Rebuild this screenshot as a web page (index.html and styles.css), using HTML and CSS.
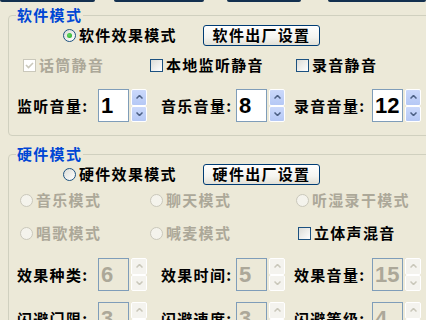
FILE: index.html
```html
<!DOCTYPE html>
<html lang="zh-CN">
<head>
    <meta charset="UTF-8">
    <meta name="viewport" content="width=device-width, initial-scale=1.0">
    <title>音效设置</title>
    <link rel="stylesheet" href="styles.css">
</head>
<body>

    <!-- tombol di atas (terpotong) -->
    <div class="topbar">
        <span class="tb tb1"></span>
        <span class="tb tb2"></span>
        <span class="tb tb3"></span>
        <span class="tb tb4"></span>
    </div>

    <!-- 软件模式 -->
    <fieldset class="group g1">
        <legend>软件模式</legend>
        <div class="mode-row">
            <label class="radio on"><span class="rb"></span>软件效果模式</label>
            <button class="btn">软件出厂设置</button>
        </div>
        <div class="opts opts-soft">
            <label class="check dis"><span class="cb"><svg width="11" height="11" viewBox="0 0 11 11"><polyline points="2,5 4.5,7.5 9,3" /></svg></span>话筒静音</label>
            <label class="check"><span class="cb"></span>本地监听静音</label>
            <label class="check"><span class="cb"></span>录音静音</label>
        </div>
        <div class="spins">
            <span class="lbl l1">监听音量:</span>
            <input class="num" value="1">
            <span class="updown">
                <span><svg width="7" height="4" viewBox="0 0 7 4"><polyline points="0.5,3.5 3.5,0.5 6.5,3.5" /></svg></span>
                <span><svg width="7" height="4" viewBox="0 0 7 4"><polyline points="0.5,0.5 3.5,3.5 6.5,0.5" /></svg></span>
            </span>
            <span class="lbl l2">音乐音量:</span>
            <input class="num" value="8">
            <span class="updown">
                <span><svg width="7" height="4" viewBox="0 0 7 4"><polyline points="0.5,3.5 3.5,0.5 6.5,3.5" /></svg></span>
                <span><svg width="7" height="4" viewBox="0 0 7 4"><polyline points="0.5,0.5 3.5,3.5 6.5,0.5" /></svg></span>
            </span>
            <span class="lbl l3">录音音量:</span>
            <input class="num" value="12">
            <span class="updown">
                <span><svg width="7" height="4" viewBox="0 0 7 4"><polyline points="0.5,3.5 3.5,0.5 6.5,3.5" /></svg></span>
                <span><svg width="7" height="4" viewBox="0 0 7 4"><polyline points="0.5,0.5 3.5,3.5 6.5,0.5" /></svg></span>
            </span>
        </div>
    </fieldset>

    <!-- 硬件模式 -->
    <fieldset class="group g2">
        <legend>硬件模式</legend>
        <div class="mode-row">
            <label class="radio"><span class="rb"></span>硬件效果模式</label>
            <button class="btn">硬件出厂设置</button>
        </div>
        <div class="opts opts-hw1">
            <label class="radio dis"><span class="rb"></span>音乐模式</label>
            <label class="radio dis"><span class="rb"></span>聊天模式</label>
            <label class="radio dis"><span class="rb"></span>听湿录干模式</label>
        </div>
        <div class="opts opts-hw2">
            <label class="radio dis"><span class="rb"></span>唱歌模式</label>
            <label class="radio dis"><span class="rb"></span>喊麦模式</label>
            <label class="check"><span class="cb"></span>立体声混音</label>
        </div>
        <div class="spins dis-row">
            <span class="lbl l1">效果种类:</span>
            <input class="num" value="6" disabled>
            <span class="updown">
                <span><svg width="7" height="4" viewBox="0 0 7 4"><polyline points="0.5,3.5 3.5,0.5 6.5,3.5" /></svg></span>
                <span><svg width="7" height="4" viewBox="0 0 7 4"><polyline points="0.5,0.5 3.5,3.5 6.5,0.5" /></svg></span>
            </span>
            <span class="lbl l2">效果时间:</span>
            <input class="num" value="5" disabled>
            <span class="updown">
                <span><svg width="7" height="4" viewBox="0 0 7 4"><polyline points="0.5,3.5 3.5,0.5 6.5,3.5" /></svg></span>
                <span><svg width="7" height="4" viewBox="0 0 7 4"><polyline points="0.5,0.5 3.5,3.5 6.5,0.5" /></svg></span>
            </span>
            <span class="lbl l3">效果音量:</span>
            <input class="num" value="15" disabled>
            <span class="updown">
                <span><svg width="7" height="4" viewBox="0 0 7 4"><polyline points="0.5,3.5 3.5,0.5 6.5,3.5" /></svg></span>
                <span><svg width="7" height="4" viewBox="0 0 7 4"><polyline points="0.5,0.5 3.5,3.5 6.5,0.5" /></svg></span>
            </span>
        </div>
        <div class="spins dis-row last">
            <span class="lbl l1">闪避门限:</span>
            <input class="num" value="3" disabled>
            <span class="updown">
                <span><svg width="7" height="4" viewBox="0 0 7 4"><polyline points="0.5,3.5 3.5,0.5 6.5,3.5" /></svg></span>
                <span><svg width="7" height="4" viewBox="0 0 7 4"><polyline points="0.5,0.5 3.5,3.5 6.5,0.5" /></svg></span>
            </span>
            <span class="lbl l2">闪避速度:</span>
            <input class="num" value="3" disabled>
            <span class="updown">
                <span><svg width="7" height="4" viewBox="0 0 7 4"><polyline points="0.5,3.5 3.5,0.5 6.5,3.5" /></svg></span>
                <span><svg width="7" height="4" viewBox="0 0 7 4"><polyline points="0.5,0.5 3.5,3.5 6.5,0.5" /></svg></span>
            </span>
            <span class="lbl l3">闪避等级:</span>
            <input class="num" value="4" disabled>
            <span class="updown">
                <span><svg width="7" height="4" viewBox="0 0 7 4"><polyline points="0.5,3.5 3.5,0.5 6.5,3.5" /></svg></span>
                <span><svg width="7" height="4" viewBox="0 0 7 4"><polyline points="0.5,0.5 3.5,3.5 6.5,0.5" /></svg></span>
            </span>
        </div>
    </fieldset>

</body>
</html>
```

FILE: styles.css
```css
body {
    margin: 0;
    width: 426px;
    height: 320px;
    overflow: hidden;
    background-color: #ece9d8;
    font-family: "Noto Sans CJK SC", sans-serif;
    font-size: 15px;
    font-weight: bold;
    letter-spacing: 1.3px;
    line-height: 18px;
    color: #000;
}

.topbar {
    display: flex;
    height: 3px;
}
.tb {
    height: 2px;
    background-color: #13304f;
    border-radius: 0 0 3px 3px;
}
.tb1 { width: 97px; }
.tb2 { width: 91px; margin-left: 19px; }
.tb3 { width: 75px; margin-left: 23px; }
.tb4 { width: 100px; margin-left: 27px; }

.group {
    width: 440px;
    margin: 3px 0 0 8px;
    padding: 0;
    border: 1px solid #d0d0bf;
    border-radius: 4px;
    box-sizing: border-box;
    min-width: 0;
}
.group legend {
    margin-left: 7px;
    padding: 0 1px;
    color: #0046d5;
    line-height: 18px;
}
.g1 {
    padding-bottom: 13px;
}
.g2 {
    margin-top: 9px;
    padding-bottom: 20px;
}

.mode-row {
    display: flex;
    align-items: center;
    height: 22px;
    padding-left: 54px;
}
.mode-row .radio {
    width: 140px;
}

.btn {
    width: 117px;
    height: 21px;
    padding: 0;
    border: 1px solid #003c74;
    border-radius: 3px;
    background: linear-gradient(#ffffff, #f4f4f0 60%, #e2e0d6);
    font: inherit;
    letter-spacing: inherit;
    color: #000;
}

.opts {
    display: grid;
    align-items: center;
    height: 20px;
}
.opts-soft {
    margin-top: 9px;
    grid-template-columns: 127px 146px auto;
    padding-left: 14px;
}
.opts-hw1 {
    margin-top: 5px;
    grid-template-columns: 130px 146px auto;
    padding-left: 11px;
}
.opts-hw2 {
    margin-top: 13px;
    grid-template-columns: 130px 148px auto;
    padding-left: 11px;
}

.radio, .check {
    display: flex;
    align-items: center;
    gap: 3px;
    white-space: nowrap;
}
.dis {
    color: #aca899;
}

.rb {
    width: 13px;
    height: 13px;
    border-radius: 50%;
    border: 1px solid #1c5180;
    box-sizing: border-box;
    background: linear-gradient(135deg, #dcdcd7, #ffffff);
    display: flex;
    align-items: center;
    justify-content: center;
    flex: none;
}
.radio.on .rb::after {
    content: "";
    width: 5px;
    height: 5px;
    border-radius: 50%;
    background: radial-gradient(circle at 40% 40%, #62dc62, #1f9f1f);
}
.radio.dis .rb {
    border-color: #cac8bb;
    background: #f4f3ec;
}

.cb {
    width: 13px;
    height: 13px;
    border: 1px solid #1c5180;
    box-sizing: border-box;
    background: linear-gradient(135deg, #dcdcd7, #ffffff);
    flex: none;
}
.check.dis .cb {
    border-color: #cac8bb;
    background: #ffffff;
}
.cb svg {
    display: block;
    fill: none;
    stroke: #cac8bb;
    stroke-width: 1.6;
}

.spins {
    display: flex;
    align-items: center;
    height: 33px;
    margin-top: 14px;
    padding-left: 8px;
}
.g2 .spins {
    margin-top: 15px;
}
.g2 .spins.last {
    margin-top: 11px;
}
.lbl {
    white-space: nowrap;
}
.l1 { width: 81px; }
.l2 { width: 75px; margin-left: 14px; }
.l3 { width: 78px; margin-left: 9px; }

.num {
    width: 31px;
    height: 33px;
    margin: 0;
    padding: 0 0 0 2px;
    border: 1px solid #7f9db9;
    box-sizing: border-box;
    background-color: #ffffff;
    font-family: "Liberation Sans", Arial, sans-serif;
    font-size: 22px;
    font-weight: bold;
    letter-spacing: 0;
    color: #000;
    outline: none;
}
.num:disabled {
    background-color: #ece9d8;
    color: #aca899;
}

.updown {
    display: flex;
    flex-direction: column;
    width: 16px;
    height: 33px;
    margin-left: 2px;
}
.updown span {
    flex: 1;
    display: flex;
    align-items: center;
    justify-content: center;
    border: 1px solid #ffffff;
    border-radius: 2px;
    background: linear-gradient(#cbd9fb, #b5c8f5);
}
.updown svg {
    fill: none;
    stroke: #4d6185;
    stroke-width: 1.5;
}
.dis-row .updown span {
    background: #f4f3ee;
}
.dis-row .updown svg {
    stroke: #c9c7ba;
}
```
